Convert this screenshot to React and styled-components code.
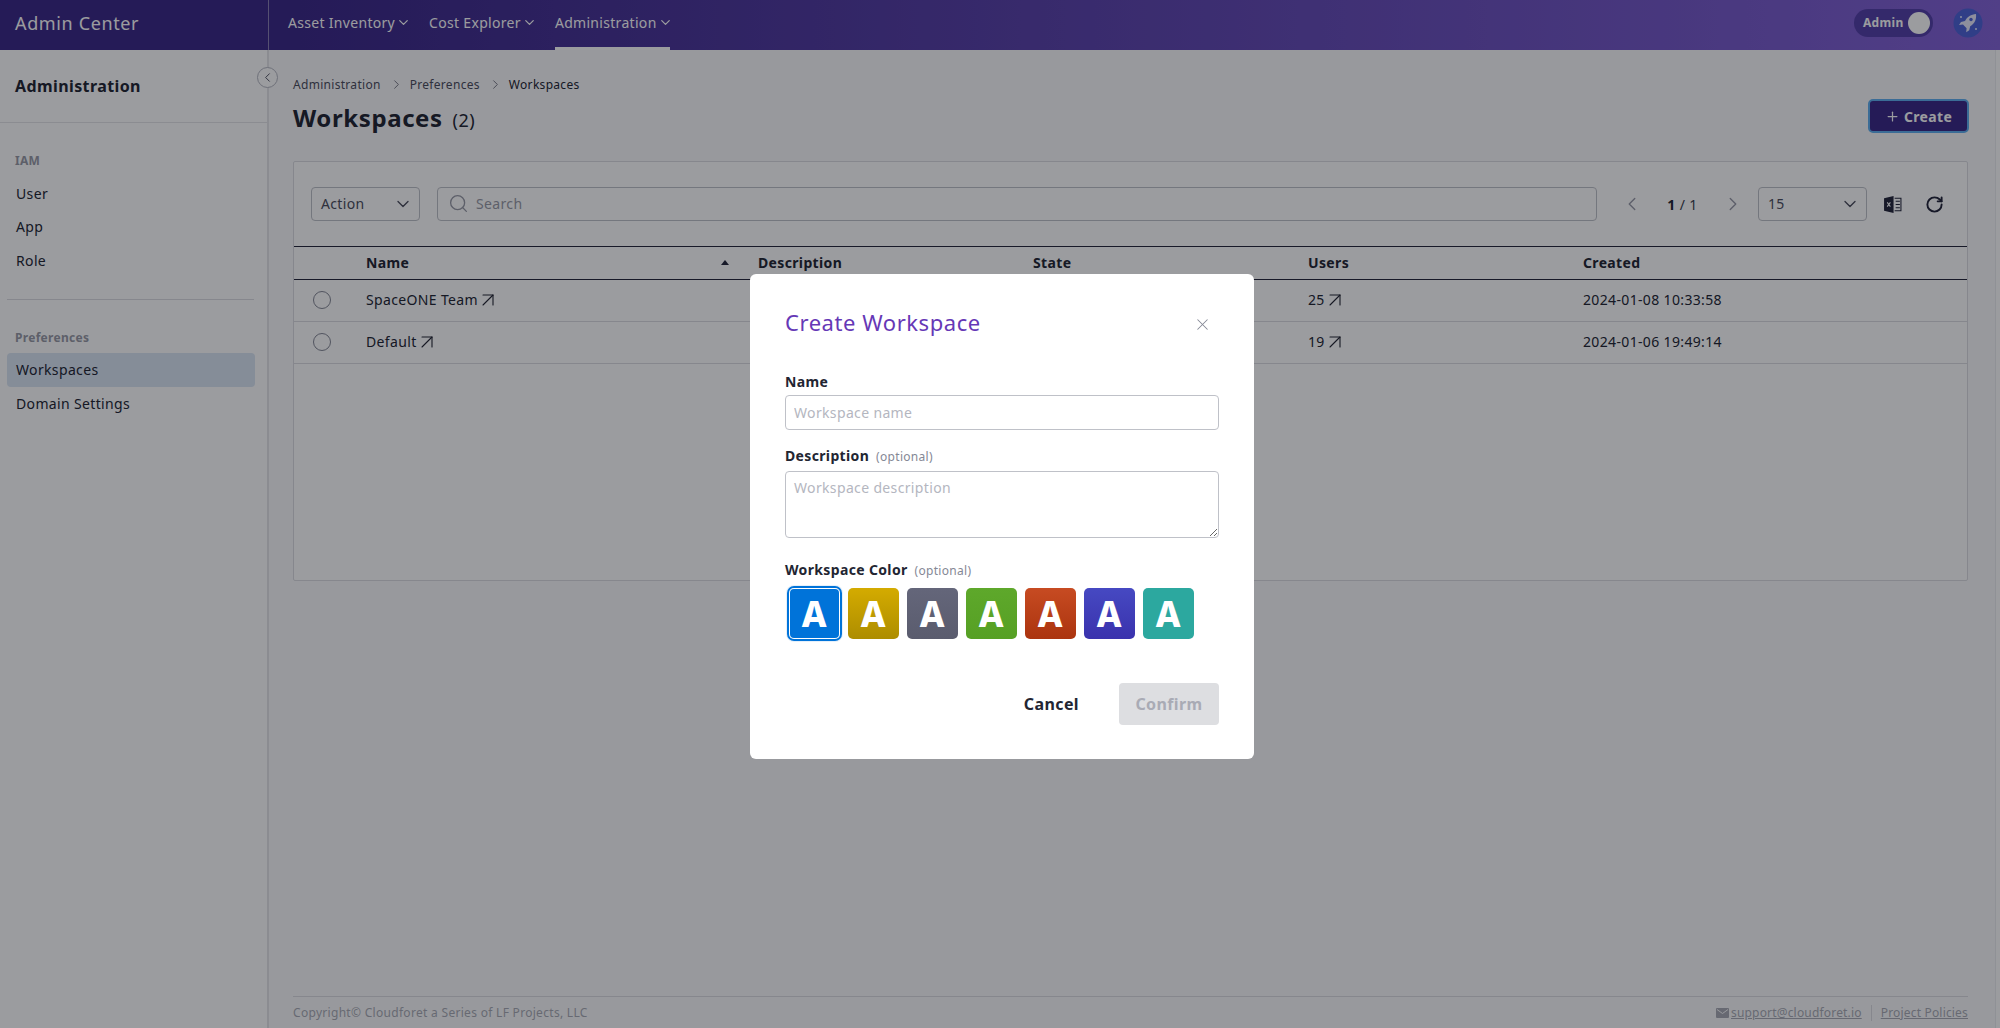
import styled, { createGlobalStyle } from 'styled-components';
import { ChevronDown, ChevronLeft, ChevronRight, Search, X, Plus, ArrowUpRight, RotateCw } from 'lucide-react';

const GlobalStyle = createGlobalStyle`
  html, body { margin: 0; padding: 0; height: 100%; overflow: hidden; }
  body { font-family: "Noto Sans", "Open Sans", sans-serif; color: #222532; background: #fff; }
  * { box-sizing: border-box; letter-spacing: 0.025em; }
`;

const NAV = ['Asset Inventory', 'Cost Explorer', 'Administration'];
const COLORS = [
  ['#0073d9', '#0073d9'],
  ['#d4ab00', '#ad8d00'],
  ['#64667a', '#5a5c6e'],
  ['#5ea82b', '#56a024'],
  ['#c74b22', '#ab340f'],
  ['#4649c2', '#3a32ad'],
  ['#2ca89f', '#2ca89f'],
];
const ROWS = [
  { name: 'SpaceONE Team', users: 25, created: '2024-01-08 10:33:58' },
  { name: 'Default', users: 19, created: '2024-01-06 19:49:14' },
];

export default function App() {
  return (
    <>
      <GlobalStyle />
      <Page>
        <TopBar>
          <Brand>Admin Center</Brand>
          <Nav>
            {NAV.map((item, i) => (
              <NavItem key={item} $active={i === 2}>
                {item}
                <ChevronDown size={15} strokeWidth={2} />
              </NavItem>
            ))}
          </Nav>
          <TopRight>
            <AdminToggle>
              Admin
              <Knob />
            </AdminToggle>
            <Avatar viewBox="0 0 30 30">
              <circle cx="15" cy="15" r="14.5" fill="#4d63d8" />
              <path d="M23 6c-5 .4-8.6 2.6-11 7l-4 1-2 3 4-.4 3.6 3.6-.4 4 3-2 1-4c4.4-2.4 6.4-6.6 5.8-12.2z" fill="#e8eafc" />
              <circle cx="18" cy="11.5" r="1.7" fill="#4d63d8" />
              <path d="M7 9h2M8 8v2M22 21h2M23 20v2" stroke="#e8eafc" strokeWidth="1" />
            </Avatar>
          </TopRight>
        </TopBar>
        <Body>
          <Sidebar>
            <SideTitle>Administration</SideTitle>
            <CollapseButton>
              <ChevronLeft size={15} strokeWidth={1.5} />
            </CollapseButton>
            <SideGroup>
              <SideLabel>IAM</SideLabel>
              <SideItem>User</SideItem>
              <SideItem>App</SideItem>
              <SideItem>Role</SideItem>
            </SideGroup>
            <SideDivider />
            <SideGroup>
              <SideLabel>Preferences</SideLabel>
              <SideItem $active>Workspaces</SideItem>
              <SideItem>Domain Settings</SideItem>
            </SideGroup>
          </Sidebar>
          <Main>
            <Breadcrumb>
              <Crumb>Administration</Crumb>
              <ChevronRight size={15} strokeWidth={1.3} />
              <Crumb>Preferences</Crumb>
              <ChevronRight size={15} strokeWidth={1.3} />
              <Crumb $current>Workspaces</Crumb>
            </Breadcrumb>
            <TitleRow>
              <Title>
                Workspaces <Count>(2)</Count>
              </Title>
              <CreateButton>
                <Plus size={15} strokeWidth={2} />
                Create
              </CreateButton>
            </TitleRow>
            <Card>
              <Toolbar>
                <SelectBox>
                  Action
                  <ChevronDown size={20} strokeWidth={1.6} />
                </SelectBox>
                <SearchBox>
                  <Search size={21} strokeWidth={1.5} />
                  Search
                </SearchBox>
                <Pager>
                  <ChevronLeft size={22} strokeWidth={1.5} />
                  <PageText>
                    <b>1</b> / 1
                  </PageText>
                  <ChevronRight size={22} strokeWidth={1.5} />
                </Pager>
                <SelectBox>
                  15
                  <ChevronDown size={20} strokeWidth={1.6} />
                </SelectBox>
                <ExcelIcon viewBox="0 0 18 18">
                  <path d="M1 3l9-2v16l-9-2z" fill="#23253a" />
                  <path d="M11 3h6v12h-6M12 6h4M12 9h4M12 12h4" fill="none" stroke="#23253a" strokeWidth="1" />
                  <path d="M4 7l3 4M7 7l-3 4" stroke="#fff" strokeWidth="1" />
                </ExcelIcon>
                <RefreshIcon>
                  <RotateCw size={19} strokeWidth={2.4} />
                </RefreshIcon>
              </Toolbar>
              <TableHead>
                <span />
                <HeadCell>
                  Name
                  <SortArrow />
                </HeadCell>
                <HeadCell>Description</HeadCell>
                <HeadCell>State</HeadCell>
                <HeadCell>Users</HeadCell>
                <HeadCell>Created</HeadCell>
              </TableHead>
              {ROWS.map((row) => (
                <TableRow key={row.name}>
                  <RadioCell>
                    <Radio />
                  </RadioCell>
                  <Cell>
                    {row.name}
                    <LinkArrow size={24} strokeWidth={1.1} />
                  </Cell>
                  <Cell />
                  <Cell />
                  <Cell>
                    {row.users}
                    <LinkArrow size={24} strokeWidth={1.1} />
                  </Cell>
                  <Cell>{row.created}</Cell>
                </TableRow>
              ))}
            </Card>
            <Footer>
              <span>Copyright© Cloudforet a Series of LF Projects, LLC</span>
              <FooterLinks>
                <MailIcon viewBox="0 0 14 12">
                  <rect y="1" width="13" height="10" rx="1" fill="#a9abb5" />
                  <path d="M1 2.5l5.5 4 5.5-4" fill="none" stroke="#fbfbfc" strokeWidth="1" />
                </MailIcon>
                <FooterLink>support@cloudforet.io</FooterLink>
                <FooterBar />
                <FooterLink>Project Policies</FooterLink>
              </FooterLinks>
            </Footer>
          </Main>
        </Body>
      </Page>
      <Overlay>
        <Modal>
          <ModalHead>
            <ModalTitle>Create Workspace</ModalTitle>
            <CloseButton>
              <X size={19} strokeWidth={1.3} />
            </CloseButton>
          </ModalHead>
          <Label $below="4px">Name</Label>
          <TextInput placeholder="Workspace name" readOnly />
          <Label $gap="16px" $below="6px">
            Description <Optional>(optional)</Optional>
          </Label>
          <TextArea placeholder="Workspace description" readOnly />
          <Label $gap="22px" $below="4px">
            Workspace Color <Optional>(optional)</Optional>
          </Label>
          <Swatches>
            {COLORS.map(([top, bottom], i) => (
              <Swatch key={top} $top={top} $bottom={bottom} $selected={i === 0}>
                A
              </Swatch>
            ))}
          </Swatches>
          <ModalActions>
            <CancelButton>Cancel</CancelButton>
            <ConfirmButton disabled>Confirm</ConfirmButton>
          </ModalActions>
        </Modal>
      </Overlay>
    </>
  );
}

const Page = styled.div`
  height: 100vh;
  display: flex;
  flex-direction: column;
`;

const TopBar = styled.header`
  height: 50px;
  flex: none;
  display: flex;
  align-items: center;
  background: linear-gradient(90deg, #3b2888 0%, #3b2888 15%, #8464d8 100%);
`;

const Brand = styled.div`
  width: 269px;
  height: 100%;
  flex: none;
  display: flex;
  align-items: center;
  padding: 0 0 4px 15px;
  font-size: 18px;
  letter-spacing: 0.035em;
  color: #fff;
  border-right: 1px solid #8a80b5;
`;

const Nav = styled.nav`
  height: 100%;
  display: flex;
  gap: 21px;
  padding-left: 19px;
`;

const NavItem = styled.div`
  height: 100%;
  display: flex;
  align-items: center;
  padding-bottom: 3px;
  font-size: 14px;
  letter-spacing: 0.022em;
  color: #fff;
  border-bottom: 3px solid ${(p) => (p.$active ? '#fff' : 'transparent')};
  svg {
    margin: 0 -3px 0 1px;
  }
`;

const TopRight = styled.div`
  margin-left: auto;
  display: flex;
  align-items: center;
  gap: 20px;
  padding: 0 17px 5px 0;
`;

const AdminToggle = styled.div`
  width: 79px;
  height: 28px;
  border-radius: 14px;
  background: #5440a8;
  display: flex;
  align-items: center;
  justify-content: space-between;
  padding: 0 3px 0 9px;
  font-size: 12px;
  font-weight: 700;
  color: #fff;
`;

const Knob = styled.span`
  width: 22px;
  height: 22px;
  border-radius: 50%;
  background: #fff;
`;

const Avatar = styled.svg`
  width: 30px;
  height: 30px;
`;

const Body = styled.div`
  flex: 1;
  display: flex;
  min-height: 0;
`;

const Sidebar = styled.aside`
  position: relative;
  width: 269px;
  flex: none;
  border-right: 2px solid #e4e5e8;
  background: #fff;
`;

const SideTitle = styled.div`
  height: 73px;
  padding: 25px 15px 0;
  font-size: 16px;
  font-weight: 700;
  line-height: 22px;
  border-bottom: 1px solid #e4e5e8;
`;

const CollapseButton = styled.div`
  position: absolute;
  top: 17px;
  right: -11px;
  width: 21px;
  height: 21px;
  border-radius: 50%;
  border: 1px solid #b4b6c0;
  background: #fff;
  display: flex;
  align-items: center;
  justify-content: center;
  color: #4b4d5c;
`;

const SideGroup = styled.div`
  padding: 28px 12px 0 7px;
`;

const SideLabel = styled.div`
  padding-left: 8px;
  height: 20px;
  line-height: 20px;
  font-size: 12px;
  font-weight: 700;
  color: #989aa6;
  margin-bottom: 5px;
`;

const SideItem = styled.div`
  height: 34px;
  margin-bottom: -0.5px;
  display: flex;
  align-items: center;
  padding-left: 9px;
  font-size: 14px;
  border-radius: 4px;
  background: ${(p) => (p.$active ? '#dbe6f4' : 'transparent')};
`;

const SideDivider = styled.div`
  height: 1px;
  margin: 22px 13px 0 7px;
  background: #dcdde2;
`;

const Main = styled.main`
  flex: 1;
  min-width: 0;
  display: flex;
  flex-direction: column;
  padding: 0 27px 0 24px;
  margin-right: 4px;
  border-right: 1px solid #ecedf0;
  background: #fbfbfc;
`;

const Breadcrumb = styled.div`
  margin-top: 26px;
  height: 18px;
  flex: none;
  display: flex;
  align-items: center;
  gap: 6px;
  padding-bottom: 1px;
  font-size: 12px;
  color: #5c5e6c;
`;

const Crumb = styled.span`
  color: ${(p) => (p.$current ? '#222532' : '#4b4d5c')};
  margin-right: 2px;
`;

const TitleRow = styled.div`
  display: flex;
  align-items: center;
  justify-content: space-between;
  height: 36px;
  flex: none;
  margin-top: 4px;
`;

const Title = styled.h1`
  margin: 6px 0 0;
  font-size: 24px;
  font-weight: 700;
  line-height: 32px;
`;

const Count = styled.span`
  font-size: 18px;
  font-weight: 400;
  margin-left: 3px;
`;

const CreateButton = styled.button`
  width: 99px;
  height: 32px;
  border-radius: 4px;
  border: none;
  outline: 2px solid #60b0f0;
  outline-offset: -1px;
  background: #3b2888;
  color: #fff;
  font: 700 14px "Noto Sans", sans-serif;
  display: flex;
  align-items: center;
  justify-content: center;
  gap: 4px;
`;

const Card = styled.section`
  margin-top: 27px;
  height: 420px;
  flex: none;
  background: #fff;
  border: 1px solid #dcdde2;
  border-radius: 2px;
`;

const Toolbar = styled.div`
  height: 84px;
  display: flex;
  align-items: center;
  padding: 0 23px 0 17px;
`;

const SelectBox = styled.div`
  width: 109px;
  height: 34px;
  flex: none;
  display: flex;
  align-items: center;
  justify-content: space-between;
  padding: 0 6px 1px 9px;
  font-size: 14px;
  color: #4b4d5c;
  border: 1px solid #bfc1c8;
  border-radius: 4px;
`;

const SearchBox = styled.div`
  flex: 1;
  height: 34px;
  margin-left: 17px;
  display: flex;
  align-items: center;
  gap: 7px;
  padding: 0 10px 1px;
  font-size: 14px;
  color: #989aa6;
  border: 1px solid #bfc1c8;
  border-radius: 4px;
`;

const Pager = styled.div`
  width: 161px;
  flex: none;
  display: flex;
  align-items: center;
  justify-content: space-between;
  padding: 0 14px 0 24px;
  color: #989aa6;
`;

const PageText = styled.span`
  font-size: 14px;
  color: #3b3d4c;
  b {
    color: #222532;
    font-weight: 700;
  }
`;

const ExcelIcon = styled.svg`
  width: 19px;
  height: 19px;
  margin-left: 16px;
  flex: none;
`;

const RefreshIcon = styled.div`
  margin-left: 23px;
  display: flex;
  color: #23253a;
`;

const COLUMNS = '64px 392px 275px 275px 275px 1fr';

const TableHead = styled.div`
  display: grid;
  grid-template-columns: ${COLUMNS};
  height: 34px;
  border-top: 1px solid #23253a;
  border-bottom: 1px solid #23253a;
`;

const HeadCell = styled.div`
  display: flex;
  align-items: center;
  justify-content: space-between;
  padding: 0 21px 2px 8px;
  font-size: 14px;
  font-weight: 700;
`;

const SortArrow = styled.span`
  width: 0;
  height: 0;
  border-left: 4px solid transparent;
  border-right: 4px solid transparent;
  border-bottom: 5px solid #23253a;
`;

const TableRow = styled.div`
  display: grid;
  grid-template-columns: ${COLUMNS};
  height: 42px;
  border-bottom: 1px solid #dcdde2;
`;

const RadioCell = styled.div`
  display: flex;
  align-items: center;
  padding: 0 0 2px 19px;
`;

const Radio = styled.span`
  width: 18px;
  height: 18px;
  border-radius: 50%;
  border: 1px solid #858895;
  background: #fff;
`;

const Cell = styled.div`
  display: flex;
  align-items: center;
  padding: 0 8px 2px;
  font-size: 14px;
`;

const LinkArrow = styled(ArrowUpRight)`
  margin: -4px -4px -4px -2px;
`;

const Footer = styled.footer`
  margin-top: auto;
  height: 32px;
  flex: none;
  display: flex;
  align-items: center;
  justify-content: space-between;
  border-top: 1px solid #dcdde2;
  font-size: 12px;
  color: #a9abb5;
`;

const FooterLinks = styled.div`
  display: flex;
  align-items: center;
  gap: 1px;
`;

const MailIcon = styled.svg`
  width: 14px;
  height: 12px;
`;

const FooterLink = styled.span`
  text-decoration: underline;
  letter-spacing: 0.015em;
`;

const FooterBar = styled.span`
  width: 1px;
  height: 16px;
  margin: 0 8px;
  background: #dcdde2;
`;

const Overlay = styled.div`
  position: fixed;
  inset: 0;
  display: flex;
  justify-content: center;
  align-items: flex-start;
  padding: 274px 0 0 4px;
  background: rgba(4, 8, 16, 0.4);
`;

const Modal = styled.div`
  width: 504px;
  height: 485px;
  background: #fff;
  border-radius: 6px;
  padding: 0 35px;
`;

const ModalHead = styled.div`
  display: flex;
  align-items: center;
  justify-content: space-between;
  height: 34px;
  margin-top: 31px;
  margin-bottom: 33px;
`;

const ModalTitle = styled.h2`
  margin: 0;
  font-size: 22px;
  font-weight: 400;
  color: #6638b6;
`;

const CloseButton = styled.div`
  display: flex;
  margin-right: 7px;
  margin-top: 4px;
  color: #858895;
`;

const Label = styled.div`
  margin-top: ${(p) => p.$gap || '0'};
  margin-bottom: ${(p) => p.$below};
  height: 19px;
  line-height: 19px;
  font-size: 14px;
  font-weight: 700;
`;

const Optional = styled.span`
  font-size: 12px;
  font-weight: 400;
  color: #858895;
  margin-left: 3px;
`;

const TextInput = styled.input`
  display: block;
  width: 100%;
  height: 35px;
  padding: 0 8px;
  border: 1px solid #bfc1c8;
  border-radius: 4px;
  font: 14px "Noto Sans", sans-serif;
  outline: none;
  &::placeholder {
    color: #b4b6c0;
  }
`;

const TextArea = styled.textarea`
  display: block;
  width: 100%;
  height: 67px;
  padding: 6px 8px;
  border: 1px solid #bfc1c8;
  border-radius: 4px;
  font: 14px/20px "Noto Sans", sans-serif;
  outline: none;
  &::placeholder {
    color: #b4b6c0;
  }
`;

const Swatches = styled.div`
  display: flex;
  gap: 8px;
  margin-top: 9px;
  padding-left: 4px;
`;

const Swatch = styled.div`
  width: 51px;
  height: 51px;
  border-radius: 5px;
  background: linear-gradient(${(p) => p.$top}, ${(p) => p.$bottom});
  color: #fff;
  font-size: 35px;
  font-weight: 800;
  line-height: 51px;
  text-align: center;
  box-shadow: ${(p) => (p.$selected ? 'inset 0 0 0 1px #fff, 0 0 0 2px #0073d9, 0 0 0 3px #e6f0fa' : 'none')};
`;

const ModalActions = styled.div`
  display: flex;
  justify-content: flex-end;
  align-items: center;
  margin-top: 44px;
`;

const CancelButton = styled.button`
  background: none;
  border: none;
  padding: 0;
  margin-right: 40px;
  font: 700 16px "Noto Sans", sans-serif;
  color: #222532;
`;

const ConfirmButton = styled.button`
  width: 100px;
  height: 42px;
  border: none;
  border-radius: 4px;
  background: #dddee1;
  color: #a9abb5;
  font: 700 16px "Noto Sans", sans-serif;
`;
